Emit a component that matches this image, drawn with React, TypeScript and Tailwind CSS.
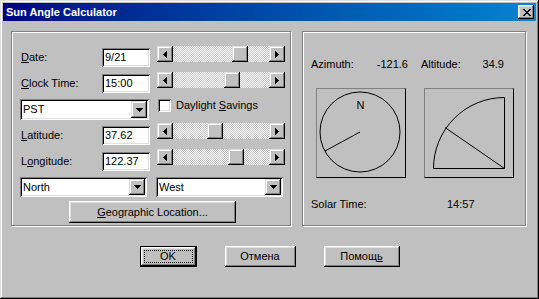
import type { ReactNode } from 'react';

const raised =
  'bg-[#c0c0c0] shadow-[inset_-1px_-1px_0_#000,inset_1px_1px_0_#fff,inset_-2px_-2px_0_#808080,inset_2px_2px_0_#dfdfdf]';
const raisedLight =
  'bg-[#c0c0c0] shadow-[inset_-1px_-1px_0_#000,inset_1px_1px_0_#dfdfdf,inset_-2px_-2px_0_#808080,inset_2px_2px_0_#fff]';
const sunken =
  'bg-white shadow-[inset_1px_1px_0_#808080,inset_-1px_-1px_0_#fff,inset_2px_2px_0_#000,inset_-2px_-2px_0_#dfdfdf]';
const etched = 'border border-[#808080] shadow-[inset_1px_1px_0_#fff,1px_1px_0_#fff]';

function Arrow({ dir }: { dir: 'left' | 'right' | 'down' }) {
  if (dir === 'down') {
    return (
      <svg width="7" height="4" viewBox="0 0 7 4" shapeRendering="crispEdges">
        <path d="M0 0h7v1H0zM1 1h5v1H1zM2 2h3v1H2zM3 3h1v1H3z" fill="#000" />
      </svg>
    );
  }
  const d =
    dir === 'left'
      ? 'M3 0h1v7H3zM2 1h1v5H2zM1 2h1v3H1zM0 3h1v1H0z'
      : 'M0 0h1v7H0zM1 1h1v5H1zM2 2h1v3H2zM3 3h1v1H3z';
  return (
    <svg width="4" height="7" viewBox="0 0 4 7" shapeRendering="crispEdges">
      <path d={d} fill="#000" />
    </svg>
  );
}

function Slider({ pos }: { pos: number }) {
  return (
    <div className="flex h-4 w-[128px]">
      <div className={`flex h-4 w-4 items-center justify-center ${raisedLight}`}>
        <Arrow dir="left" />
      </div>
      <div className="relative flex-1 bg-[repeating-conic-gradient(#fff_0_25%,#c0c0c0_0_50%)] bg-[length:2px_2px]">
        <div className={`absolute top-0 h-4 w-4 ${raisedLight}`} style={{ left: pos }} />
      </div>
      <div className={`flex h-4 w-4 items-center justify-center ${raisedLight}`}>
        <Arrow dir="right" />
      </div>
    </div>
  );
}

function Field({ value }: { value: string }) {
  return (
    <div className={`ml-auto flex h-[19px] w-[48px] items-center pl-[3px] ${sunken}`}>{value}</div>
  );
}

function Combo({ value, w, h }: { value: string; w: string; h: string }) {
  return (
    <div className={`flex items-center p-[2px] ${w} ${h} ${sunken}`}>
      <span className="flex-1 pl-[1px]">{value}</span>
      <div className={`flex h-full w-4 items-center justify-center ${raisedLight}`}>
        <Arrow dir="down" />
      </div>
    </div>
  );
}

function LabelRow({ label, value, pos, top = 'mt-[2px]' }: { label: ReactNode; value: string; pos: number; top?: string }) {
  return (
    <div className="flex items-start gap-[7px]">
      <div className={`flex w-[130px] items-center ${top}`}>
        <span className="pl-[1px]">{label}</span>
        <Field value={value} />
      </div>
      <Slider pos={pos} />
    </div>
  );
}

function Button({ children, w, isDefault }: { children: ReactNode; w: string; isDefault?: boolean }) {
  if (isDefault) {
    return (
      <div className={`h-[21px] border border-black ${w}`}>
        <div className={`flex h-full w-full p-[3px] ${raised}`}>
          <span className="flex flex-1 items-center justify-center border border-dotted border-black">
            {children}
          </span>
        </div>
      </div>
    );
  }
  return <div className={`flex h-[21px] items-center justify-center ${w} ${raised}`}>{children}</div>;
}

export default function App() {
  return (
    <div className="h-[299px] w-[539px] font-['Liberation_Sans',Arial,sans-serif] text-[11px] leading-[13px] text-black">
      <div className="flex h-full w-full flex-col bg-[#c0c0c0] p-[3px] shadow-[inset_-1px_-1px_0_#000,inset_1px_1px_0_#dfdfdf,inset_-2px_-2px_0_#808080,inset_2px_2px_0_#fff]">
        {/* Title bar */}
        <div className="flex h-[18px] items-center bg-gradient-to-r from-[#000080] to-[#1084d0] pl-[3px] pr-[2px]">
          <span className="font-bold text-white">Sun Angle Calculator</span>
          <div className={`ml-auto flex h-[14px] w-4 items-center justify-center pl-[1px] ${raised}`}>
            <svg width="8" height="7" viewBox="0 0 8 7" shapeRendering="crispEdges">
              <path
                d="M0 0h2v1H0zM6 0h2v1H6zM1 1h2v1H1zM5 1h2v1H5zM2 2h4v1H2zM3 3h2v1H3zM2 4h4v1H2zM1 5h2v1H1zM5 5h2v1H5zM0 6h2v1H0zM6 6h2v1H6z"
                fill="#000"
              />
            </svg>
          </div>
        </div>

        <div className="flex gap-[11px] pl-[8px] pt-[10px]">
          {/* Input group */}
          <div className={`flex h-[195px] w-[280px] flex-col pl-[8px] pt-[14px] ${etched}`}>
            <LabelRow label={<><u>D</u>ate:</>} value="9/21" pos={59} />
            <div className="mt-[5px]">
              <LabelRow label={<><u>C</u>lock Time:</>} value="15:00" pos={51} />
            </div>
            <div className="mt-[6px] flex items-start">
              <Combo value="PST" w="w-[129px]" h="h-[21px]" />
              <div className="ml-[9px] flex items-center">
                <div className={`h-[13px] w-[13px] ${sunken}`} />
                <span className="ml-[5px]">
                  Daylight <u>S</u>avings
                </span>
              </div>
            </div>
            <div className="mt-[3px]">
              <LabelRow label={<><u>L</u>atitude:</>} value="37.62" pos={34} top="mt-[3px]" />
            </div>
            <div className="mt-[4px]">
              <LabelRow label={<>L<u>o</u>ngitude:</>} value="122.37" pos={55} top="mt-[3px]" />
            </div>
            <div className="mt-[6px] flex gap-[9px]">
              <Combo value="North" w="w-[127px]" h="h-[20px]" />
              <Combo value="West" w="w-[127px]" h="h-[20px]" />
            </div>
            <div className={`ml-[49px] mt-[4px] flex h-[22px] w-[167px] items-center justify-center ${raised}`}>
              <span>
                <u>G</u>eographic Location...
              </span>
            </div>
          </div>

          {/* Result group */}
          <div className={`flex h-[195px] w-[224px] flex-col pl-[8px] pt-[26px] ${etched}`}>
            <div className="flex">
              <div className="flex w-[97px] justify-between">
                <span>Azimuth:</span>
                <span>-121.6</span>
              </div>
              <div className="ml-[13px] flex w-[83px] justify-between">
                <span>Altitude:</span>
                <span>34.9</span>
              </div>
            </div>
            <div className="ml-[5px] mt-[17px] flex gap-[18px]">
              <div className="h-[90px] w-[90px] border-b border-l border-r border-t border-b-black border-l-[#808080] border-r-black border-t-[#808080]">
                <svg width="88" height="88" viewBox="1 1 88 88" className="block">
                  <circle cx="44" cy="44" r="40" fill="none" stroke="#000" strokeWidth="1" />
                  <line x1="44" y1="44" x2="9" y2="63" stroke="#000" strokeWidth="1" />
                  <text x="44.5" y="21" textAnchor="middle" fontSize="11" fontFamily="Liberation Sans, Arial, sans-serif">
                    N
                  </text>
                </svg>
              </div>
              <div className="h-[90px] w-[90px] border-b border-l border-r border-t border-b-black border-l-[#808080] border-r-black border-t-[#808080]">
                <svg width="88" height="88" viewBox="1 1 88 88" className="block">
                  <path d="M9.5 80.5 A71 71 0 0 1 80.5 9.5 L80.5 80.5 Z" fill="none" stroke="#000" strokeWidth="1" />
                  <line x1="80.5" y1="80.5" x2="21" y2="39.5" stroke="#000" strokeWidth="1" />
                </svg>
              </div>
            </div>
            <div className="mt-[20px] flex">
              <span className="w-[136px]">Solar Time:</span>
              <span>14:57</span>
            </div>
          </div>
        </div>

        <div className="mt-[20px] flex justify-center gap-[28px]">
          <Button w="w-[57px]" isDefault>
            OK
          </Button>
          <Button w="w-[71px]">Отмена</Button>
          <Button w="w-[76px]">
            Помощ<u>ь</u>
          </Button>
        </div>
      </div>
    </div>
  );
}
